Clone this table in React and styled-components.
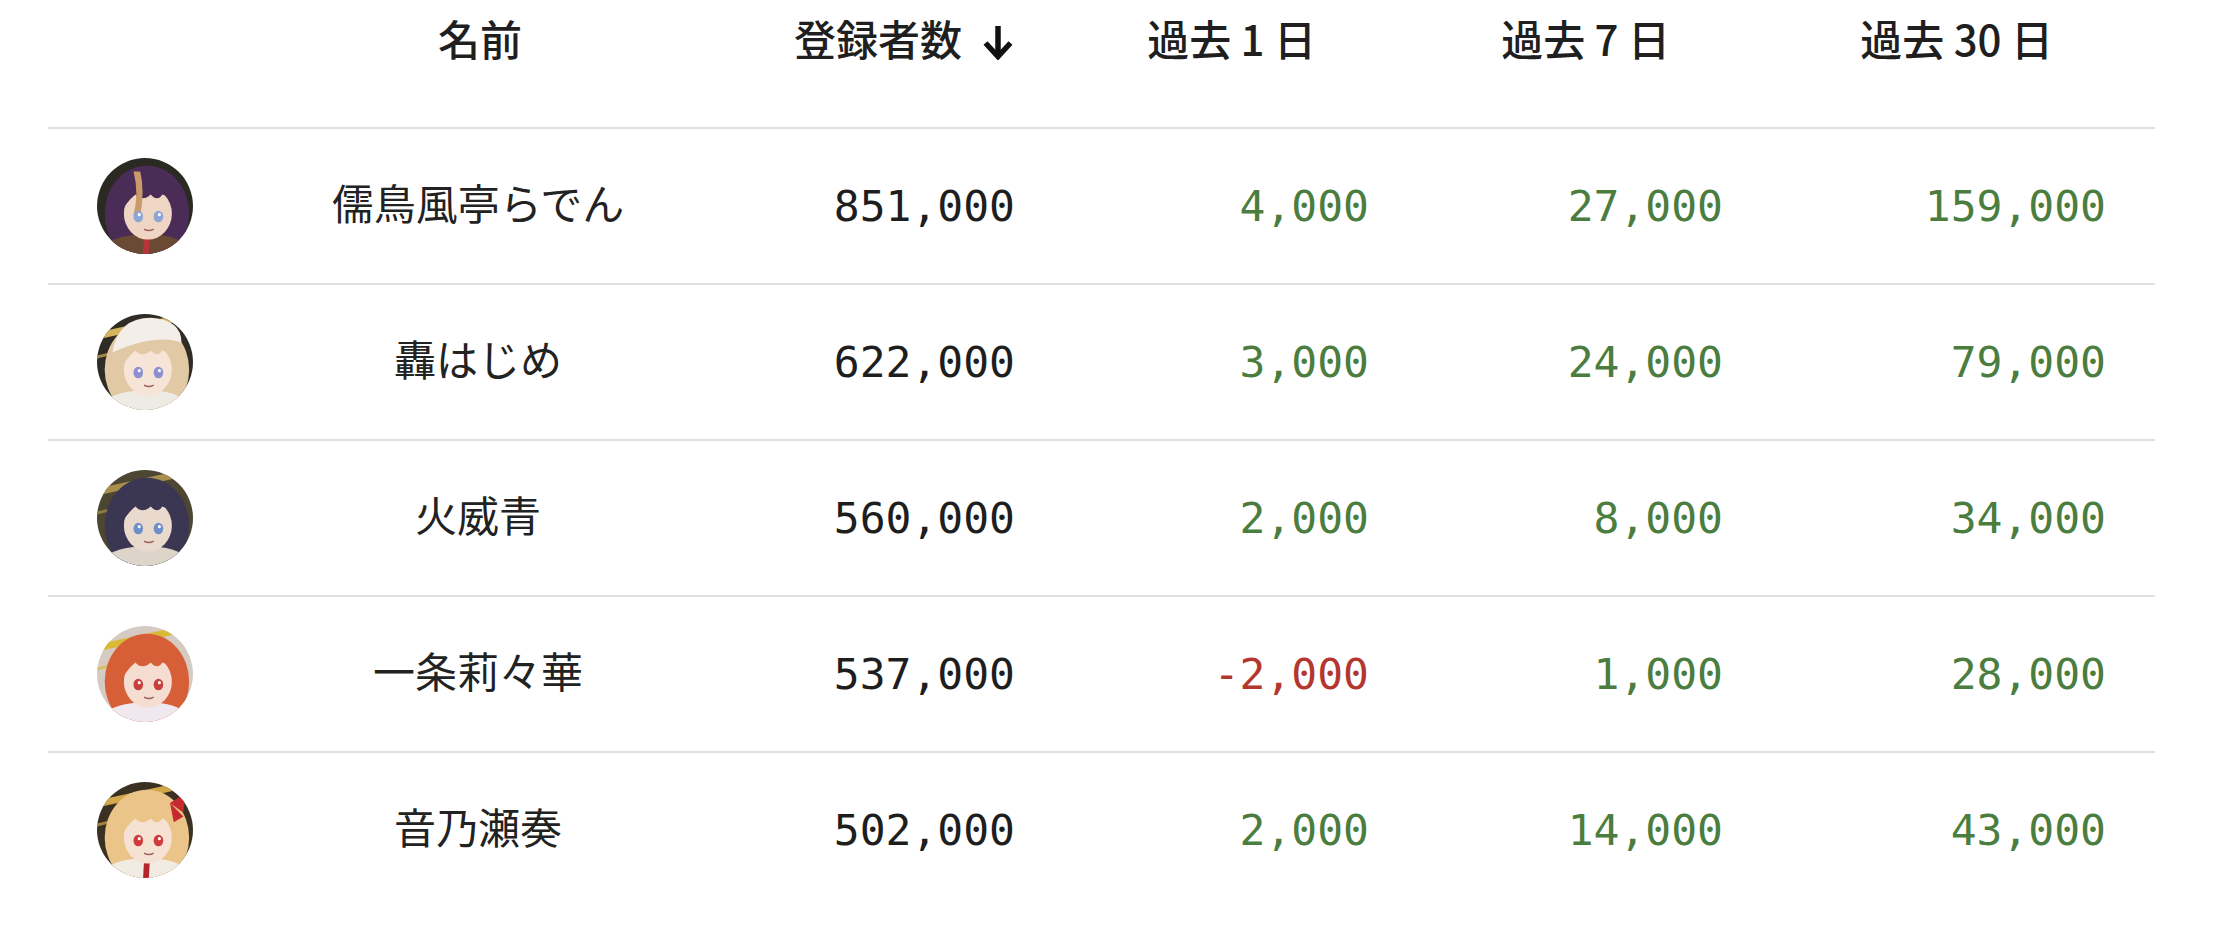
import React, { useId } from 'react';
import styled, { createGlobalStyle } from 'styled-components';

const GlobalStyle = createGlobalStyle`
  html, body {
    margin: 0;
    padding: 0;
    background: #ffffff;
  }
  body {
    font-family: "Noto Sans CJK JP", "Noto Sans", sans-serif;
    color: #212121;
  }
`;

const COLUMNS = '213px 438px 365px 354px 354px 383px';

const Page = styled.div`
  padding: 0 59px 0 48px;
  width: 2107px;
`;

const HeaderRow = styled.div`
  display: grid;
  grid-template-columns: ${COLUMNS};
  height: 116px;
  padding-top: 11px;
  border-bottom: 2px solid #e0e0e0;
  align-items: start;
`;

const HeadCell = styled.div`
  display: flex;
  justify-content: ${props => props.$align === 'center' ? 'center' : 'flex-end'};
  padding-right: ${props => props.$align === 'center' ? '0' : '51px'};
  font-size: 42px;
  line-height: 54px;
  font-weight: 500;
  color: #1f1f1f;
  white-space: pre;
`;

const SortLabel = styled.span`
  display: inline-flex;
  align-items: center;
`;

const SortIcon = styled.svg`
  width: 30px;
  height: 34px;
  margin-left: 21px;
  margin-top: 10px;
  visibility: ${props => props.$active ? 'visible' : 'hidden'};
`;

const Row = styled.div`
  display: grid;
  grid-template-columns: ${COLUMNS};
  height: 154px;
  border-bottom: ${props => props.$last ? 'none' : '2px solid #e0e0e0'};
  align-items: center;
`;

const AvatarCell = styled.div`
  padding-left: 49px;
  display: flex;
  align-items: center;
`;

const NameCell = styled.div`
  text-align: center;
  padding: 0 4px 8px 0;
  font-size: 42px;
  line-height: 54px;
  color: #222222;
`;

const NumberCell = styled.div`
  text-align: right;
  padding-right: 49px;
  font-family: "DejaVu Sans Mono", "Liberation Mono", monospace;
  font-size: 43px;
  line-height: 54px;
  color: ${props => props.$tone === 'up' ? '#4b7d3f' : props.$tone === 'down' ? '#b3372f' : '#1e1e1e'};
`;

const AvatarSvg = styled.svg`
  width: 96px;
  height: 96px;
  display: block;
`;

function Avatar({ look }) {
  const id = useId().replace(/:/g, '');
  return (
    <AvatarSvg viewBox="0 0 100 100">
      <defs>
        <clipPath id={`c${id}`}>
          <circle cx="50" cy="50" r="50" />
        </clipPath>
      </defs>
      <g clipPath={`url(#c${id})`}>
        <rect width="100" height="100" fill={look.bg} />
        {look.streak && (
          <>
            <path d="M-5 24 L105 0" stroke={look.streak} strokeWidth="7" />
            <path d="M-5 46 L36 36" stroke={look.streak} strokeWidth="3" opacity="0.7" />
          </>
        )}
        <ellipse cx="52" cy="58" rx="44" ry="50" fill={look.hairBack || look.hair} />
        <path d="M0 100 Q14 78 52 80 Q88 78 100 100 Z" fill={look.cloth} />
        {look.tie && <path d="M49 82 L55 82 L54 100 L48 100 Z" fill={look.tie} />}
        <ellipse cx="53" cy="58" rx="25" ry="27" fill={look.skin} />
        <path
          d="M22 62 Q18 16 52 12 Q86 14 84 62 Q78 40 68 38 Q63 46 56 38 Q47 46 40 38 Q30 46 22 62 Z"
          fill={look.hair}
        />
        {look.streakHair && (
          <path d="M38 14 Q44 36 38 60 L45 60 Q50 34 45 14 Z" fill={look.streakHair} />
        )}
        <ellipse cx="43" cy="61" rx="5" ry="6" fill={look.eye} />
        <ellipse cx="64" cy="61" rx="5" ry="6" fill={look.eye} />
        <circle cx="44" cy="59" r="1.6" fill="#ffffff" />
        <circle cx="65" cy="59" r="1.6" fill="#ffffff" />
        <path d="M49 74 Q54 77 59 74" stroke="#a0605a" strokeWidth="1.6" fill="none" />
        {look.hat && (
          <path d="M16 40 Q22 4 56 4 Q88 6 88 30 Q62 20 16 40 Z" fill={look.hat} />
        )}
        {look.ribbon && (
          <path d="M76 22 L92 12 L90 32 Z M76 22 L90 36 L80 42 Z" fill={look.ribbon} />
        )}
      </g>
    </AvatarSvg>
  );
}

function SortArrow({ active }) {
  return (
    <SortIcon $active={active} viewBox="0 0 30 34">
      <path d="M15 0 V30" stroke="#111" strokeWidth="5.5" />
      <path d="M2.5 17 L15 30.5 L27.5 17" stroke="#111" strokeWidth="5.5" fill="none" />
    </SortIcon>
  );
}

const members = [
  {
    name: '儒鳥風亭らでん', subs: 851000, d1: 4000, d7: 27000, d30: 159000,
    look: { bg: '#2b2a22', hair: '#4b2c56', streakHair: '#c99a6c', skin: '#efd6c4', eye: '#8ea6d6', cloth: '#6b4a33', tie: '#b8343a' },
  },
  {
    name: '轟はじめ', subs: 622000, d1: 3000, d7: 24000, d30: 79000,
    look: { bg: '#2e2c24', streak: '#d4b45c', hair: '#e2c9a6', skin: '#f6e4d6', eye: '#8c90d2', cloth: '#eeeae4', hat: '#f3efe8' },
  },
  {
    name: '火威青', subs: 560000, d1: 2000, d7: 8000, d30: 34000,
    look: { bg: '#4c4632', streak: '#a88f4e', hair: '#3b3652', skin: '#e9dacd', eye: '#6f8fc8', cloth: '#ddd5ca' },
  },
  {
    name: '一条莉々華', subs: 537000, d1: -2000, d7: 1000, d30: 28000,
    look: { bg: '#d6cbc3', streak: '#d9b938', hair: '#d65f38', skin: '#f6ddd1', eye: '#c8403e', cloth: '#efe8ee' },
  },
  {
    name: '音乃瀬奏', subs: 502000, d1: 2000, d7: 14000, d30: 43000,
    look: { bg: '#3a3122', streak: '#d2a84a', hair: '#ebc489', skin: '#f6e2d3', eye: '#cf3c3c', cloth: '#f1ebe3', tie: '#b3262e', ribbon: '#c42a2e' },
  },
];

const fmt = n => n.toLocaleString('en-US');
const tone = n => (n < 0 ? 'down' : 'up');

export default function App() {
  return (
    <>
      <GlobalStyle />
      <Page>
        <HeaderRow>
          <div />
          <HeadCell $align="center">名前</HeadCell>
          <HeadCell>
            <SortLabel>登録者数<SortArrow active /></SortLabel>
          </HeadCell>
          <HeadCell>
            <SortLabel>過去 1 日<SortArrow /></SortLabel>
          </HeadCell>
          <HeadCell>
            <SortLabel>過去 7 日<SortArrow /></SortLabel>
          </HeadCell>
          <HeadCell>
            <SortLabel>過去 30 日<SortArrow /></SortLabel>
          </HeadCell>
        </HeaderRow>
        {members.map((m, i) => (
          <Row key={m.name} $last={i === members.length - 1}>
            <AvatarCell>
              <Avatar look={m.look} />
            </AvatarCell>
            <NameCell>{m.name}</NameCell>
            <NumberCell>{fmt(m.subs)}</NumberCell>
            <NumberCell $tone={tone(m.d1)}>{fmt(m.d1)}</NumberCell>
            <NumberCell $tone={tone(m.d7)}>{fmt(m.d7)}</NumberCell>
            <NumberCell $tone={tone(m.d30)}>{fmt(m.d30)}</NumberCell>
          </Row>
        ))}
      </Page>
    </>
  );
}
